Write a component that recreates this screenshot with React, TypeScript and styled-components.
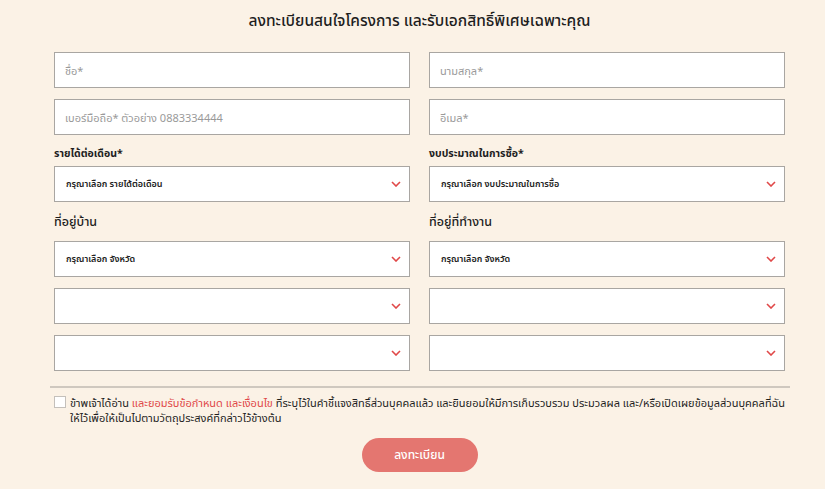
import styled, { createGlobalStyle } from "styled-components";

const Global = createGlobalStyle`
  html, body {
    margin: 0;
    padding: 0;
    background: #fbf2e6;
  }
  body {
    font-family: "Noto Sans", "Noto Sans Thai", "DejaVu Sans", sans-serif;
    color: #222;
  }
`;

const Page = styled.div`
  width: 731px;
  margin-left: 54px;
  padding-top: 8px;
`;

const Title = styled.h1`
  margin: 0 0 20px;
  text-align: center;
  font-size: 15.5px;
  line-height: 24px;
  font-weight: 500;
  color: #1e1e1e;
`;

const Grid = styled.div`
  display: grid;
  grid-template-columns: 356px 356px;
  column-gap: 19px;
  row-gap: 11px;
`;

const Field = styled.input`
  box-sizing: border-box;
  width: 100%;
  height: 36px;
  border: 1.5px solid #a9a6a2;
  background: #fff;
  padding: 0 10px;
  font-family: inherit;
  font-size: 11px;
  outline: none;
  &::placeholder {
    color: #9a9a9a;
  }
`;

const Label = styled.div<{ $big?: boolean }>`
  font-size: ${(p) => (p.$big ? "12.5px" : "10.5px")};
  font-weight: ${(p) => (p.$big ? 500 : 700)};
  line-height: ${(p) => (p.$big ? "20px" : "16px")};
  margin-top: -1px;
  margin-bottom: ${(p) => (p.$big ? "-2px" : "-6px")};
  color: #1e1e1e;
`;

const SelectBox = styled.div`
  box-sizing: border-box;
  height: 36px;
  border: 1.5px solid #a9a6a2;
  background: #fff;
  display: flex;
  align-items: center;
  justify-content: space-between;
  padding: 0 8px 0 11px;
  font-size: 9px;
  font-weight: 600;
  color: #222;
`;

const Divider = styled.hr`
  border: none;
  height: 2px;
  background: #cfc8bf;
  margin: 15px -5px 7px -4px;
`;

const Consent = styled.label`
  display: flex;
  gap: 4px;
  font-size: 11px;
  line-height: 15px;
  color: #1e1e1e;
`;

const Check = styled.span`
  flex: none;
  box-sizing: border-box;
  width: 12px;
  height: 12px;
  margin-top: 1px;
  background: #fff;
  border: 1px solid #c4c0bb;
`;

const Red = styled.span`
  color: #e04848;
`;

const Actions = styled.div`
  display: flex;
  justify-content: center;
  margin-top: 13px;
`;

const Submit = styled.button`
  width: 116px;
  height: 34px;
  border: none;
  border-radius: 17px;
  background: #e47670;
  color: #fff;
  font-family: inherit;
  font-size: 12px;
  font-weight: 500;
`;

const Chevron = () => (
  <svg width="10" height="6" viewBox="0 0 10 6" fill="none">
    <path d="M1 1l4 4 4-4" stroke="#e04848" strokeWidth="1.6" />
  </svg>
);

const Select = ({ text }: { text?: string }) => (
  <SelectBox>
    <span>{text}</span>
    <Chevron />
  </SelectBox>
);

export default function App() {
  return (
    <>
      <Global />
      <Page>
        <Title>ลงทะเบียนสนใจโครงการ และรับเอกสิทธิ์พิเศษเฉพาะคุณ</Title>
        <Grid>
          <Field placeholder="ชื่อ*" />
          <Field placeholder="นามสกุล*" />
          <Field placeholder="เบอร์มือถือ* ตัวอย่าง 0883334444" />
          <Field placeholder="อีเมล*" />
          <Label>รายได้ต่อเดือน*</Label>
          <Label>งบประมาณในการซื้อ*</Label>
          <Select text="กรุณาเลือก รายได้ต่อเดือน" />
          <Select text="กรุณาเลือก งบประมาณในการซื้อ" />
          <Label $big>ที่อยู่บ้าน</Label>
          <Label $big>ที่อยู่ที่ทำงาน</Label>
          <Select text="กรุณาเลือก จังหวัด" />
          <Select text="กรุณาเลือก จังหวัด" />
          <Select />
          <Select />
          <Select />
          <Select />
        </Grid>
        <Divider />
        <Consent>
          <Check />
          <span>
            ข้าพเจ้าได้อ่าน <Red>และยอมรับข้อกำหนด และเงื่อนไข</Red>{" "}
            ที่ระบุไว้ในคำชี้แจงสิทธิ์ส่วนบุคคลแล้ว และยินยอมให้มีการเก็บรวบรวม ประมวลผล
            และ/หรือเปิดเผยข้อมูลส่วนบุคคลที่ฉันให้ไว้เพื่อให้เป็นไปตามวัตถุประสงค์ที่กล่าวไว้ข้างต้น
          </span>
        </Consent>
        <Actions>
          <Submit>ลงทะเบียน</Submit>
        </Actions>
      </Page>
    </>
  );
}
